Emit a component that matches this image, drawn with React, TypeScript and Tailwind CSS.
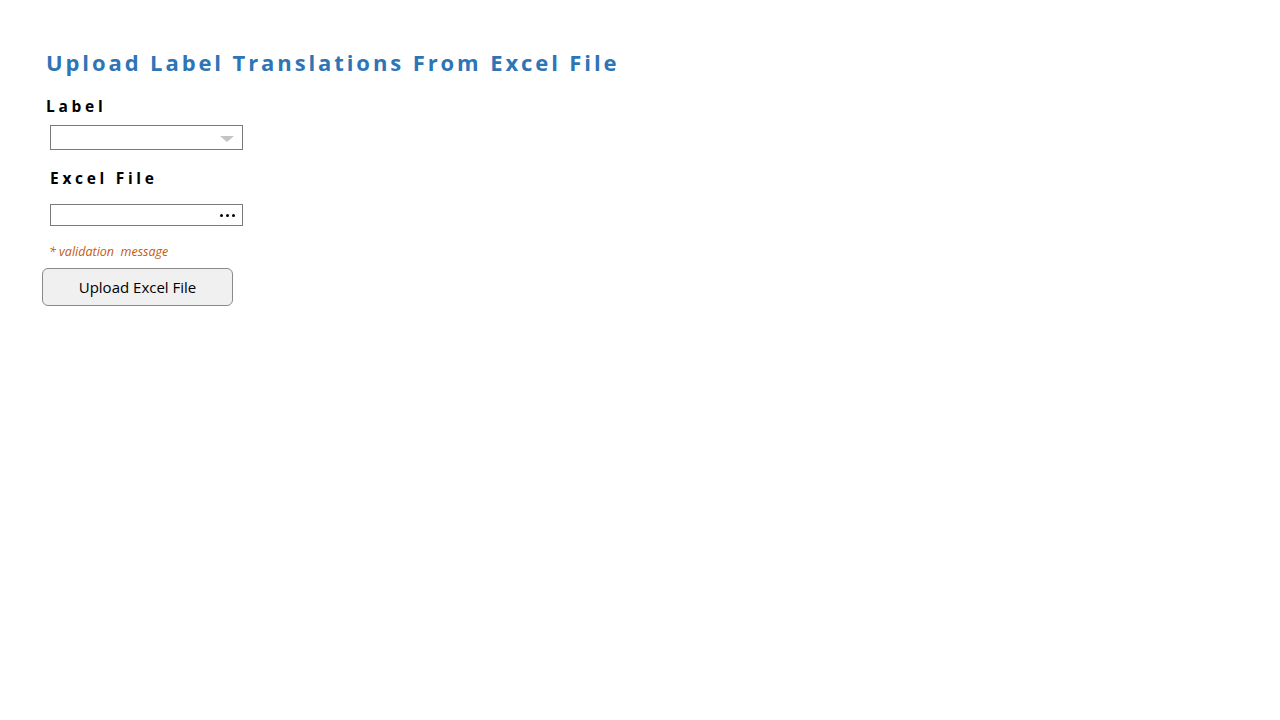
export default function App() {
  return (
    <main className="min-h-screen bg-white pl-[46px] pt-[48px] font-['Open_Sans',sans-serif]">
      <h1 className="text-[22px] font-bold leading-[28px] tracking-[2.9px] text-[#2e75b6]">
        Upload Label Translations From Excel File
      </h1>

      <div className="mt-[20px] text-[15.5px] font-bold leading-[20px] tracking-[3.7px] text-black">Label</div>
      <div className="ml-[4px] mt-[9px] flex h-[25px] w-[193px] items-center justify-end border border-[#7a7a7a] bg-white pr-[8px]">
        <svg width="14" height="6" viewBox="0 0 14 6" className="mt-[2px]">
          <path d="M0 0 L14 0 L7 6 Z" fill="#c4c4c4" />
        </svg>
      </div>

      <div className="ml-[4px] mt-[18px] text-[15.5px] font-bold leading-[20px] tracking-[3.7px] text-black">
        Excel File
      </div>
      <div className="ml-[4px] mt-[16px] flex h-[22px] w-[193px] items-center justify-end border border-[#7a7a7a] bg-white pr-[7px]">
        <span className="flex gap-[3px]">
          <span className="h-[3px] w-[3px] rounded-full bg-black" />
          <span className="h-[3px] w-[3px] rounded-full bg-black" />
          <span className="h-[3px] w-[3px] rounded-full bg-black" />
        </span>
      </div>

      <p className="ml-[3px] mt-[17px] text-[12.5px] italic leading-[18px] text-[#c55a11]">* validation&nbsp; message</p>

      <button className="-ml-[4px] mt-[7px] h-[38px] w-[191px] rounded-[6px] border border-[#8a8a8a] bg-[#f0f0f0] text-[15px] text-black">
        Upload Excel File
      </button>
    </main>
  );
}
